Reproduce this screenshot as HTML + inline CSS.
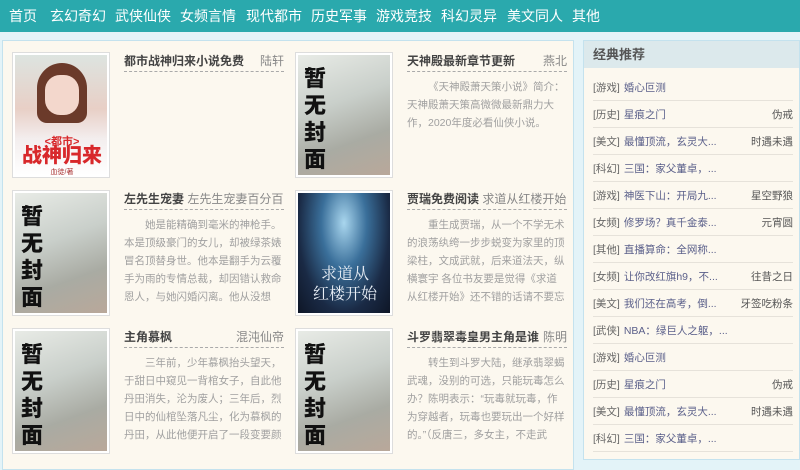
<!DOCTYPE html>
<html><head><meta charset="utf-8"><style>
*{margin:0;padding:0;box-sizing:border-box}
body{width:800px;height:456px;overflow:hidden;background:#e3f3f8;font-family:"Liberation Sans","Noto Sans CJK SC",sans-serif;position:relative}
.nav{position:absolute;left:0;top:0;width:800px;height:32px;background:#2aa9ad}
.nav span{position:absolute;top:8px;color:#fff;font-size:14px;line-height:16px;white-space:nowrap}
.left{position:absolute;left:2px;top:40px;width:572px;height:430px;background:#fcf8ef;border:1px solid #c4e2ee}
.item{position:absolute;width:270px;height:130px}
.cover{position:absolute;left:0;top:0;width:98px;height:126px;border:1px solid #ddd;background:#fff;padding:2px}
.cv{width:100%;height:100%;position:relative;overflow:hidden;background:linear-gradient(160deg,#e8ebe6 0%,#c9cfca 40%,#a9aba3 70%,#b9a89a 100%)}
.cv b{position:absolute;left:6px;top:10px;width:26px;font-size:22px;line-height:27px;color:#111;font-weight:900}
.t{position:absolute;left:112px;top:0;width:160px;height:20px;border-bottom:1px dashed #aaa;font-size:12px;line-height:19px;white-space:nowrap;overflow:hidden}
.t b{color:#444}.t i{font-style:normal;color:#888;float:right}
.d{position:absolute;left:112px;top:26px;width:158px;font-size:10.5px;line-height:18px;color:#a0a0a0;text-indent:2em;height:90px;overflow:hidden}
.right{position:absolute;left:583px;top:40px;width:217px;height:420px;background:#fcf8ef;border:1px solid #c4e2ee}
.rh{height:27px;background:#dce9ec;font-size:13px;font-weight:bold;color:#555;line-height:27px;padding-left:9px}
.row{position:absolute;left:9px;width:200px;height:27px;border-bottom:1px solid #e6e2da;font-size:10.5px;line-height:28px;white-space:nowrap}
.row .c{color:#666}.row .n{color:#5a5f8a;margin-left:4px}.row .a{position:absolute;right:0;color:#555}
</style></head><body>
<div class="nav"><span style="left:9px">首页</span><span style="left:50px">玄幻奇幻</span><span style="left:115px">武侠仙侠</span><span style="left:180px">女频言情</span><span style="left:246px">现代都市</span><span style="left:311px">历史军事</span><span style="left:376px">游戏竞技</span><span style="left:441px">科幻灵异</span><span style="left:507px">美文同人</span><span style="left:572px">其他</span></div>
<div class="left">
<div class="item" style="left:9px;top:11px"><div class="cover"><div class="cv" style="background:linear-gradient(180deg,#dde4e0 0%,#e8cfc6 45%,#f3eeee 70%,#fff 100%)"><div style="position:absolute;left:22px;top:8px;width:50px;height:60px;border-radius:25px 25px 10px 10px;background:#6b3a2a"></div><div style="position:absolute;left:30px;top:20px;width:34px;height:40px;border-radius:15px;background:#f3d7cc"></div><div style="position:absolute;left:4px;top:78px;width:86px;text-align:center;color:#d8282b;font-size:11px;font-weight:bold">&lt;都市&gt;</div><div style="position:absolute;left:2px;top:90px;width:90px;text-align:center;color:#d8282b;font-size:20px;font-weight:900;line-height:22px">战神归来</div><div style="position:absolute;left:0;top:112px;width:94px;text-align:center;color:#a33;font-size:7px">血徒/著</div></div></div>
<div class="t"><b>都市战神归来小说免费</b><i>陆轩</i></div></div>
<div class="item" style="left:292px;top:11px"><div class="cover"><div class="cv"><b>暂无封面</b></div></div>
<div class="t"><b>天神殿最新章节更新</b><i>燕北</i></div><div class="d">《天神殿萧天策小说》简介：天神殿萧天策高微微最新鼎力大作，2020年度必看仙侠小说。</div></div>
<div class="item" style="left:9px;top:149px"><div class="cover"><div class="cv"><b>暂无封面</b></div></div>
<div class="t"><b>左先生宠妻</b> <span style="color:#888">左先生宠妻百分百</span></div><div class="d">她是能精确到毫米的神枪手。本是顶级豪门的女儿，却被绿茶婊冒名顶替身世。他本是翻手为云覆手为雨的专情总裁，却因错认救命恩人，与她闪婚闪离。他从没想</div></div>
<div class="item" style="left:292px;top:149px"><div class="cover"><div class="cv" style="background:radial-gradient(ellipse at 50% 25%,#a9d6ee 0%,#3a6f9a 35%,#1a2a45 70%,#0e1626 100%)"><div style="position:absolute;left:4px;top:70px;width:86px;text-align:center;color:#e8eef5;font-size:16px;line-height:20px;font-family:'Noto Serif CJK SC',serif">求道从<br>红楼开始</div></div></div>
<div class="t"><b>贾瑞免费阅读</b> <span style="color:#888">求道从红楼开始</span></div><div class="d">重生成贾瑞，从一个不学无术的浪荡纨绔一步步蜕变为家里的顶梁柱，文成武就，后来道法天，纵横寰宇 各位书友要是觉得《求道从红楼开始》还不错的话请不要忘记</div></div>
<div class="item" style="left:9px;top:287px"><div class="cover"><div class="cv"><b>暂无封面</b></div></div>
<div class="t"><b>主角慕枫</b><i>混沌仙帝</i></div><div class="d">三年前，少年慕枫抬头望天，于甜日中窥见一背棺女子，自此他丹田消失，沦为废人；三年后，烈日中的仙棺坠落凡尘，化为慕枫的丹田，从此他便开启了一段变要颜</div></div>
<div class="item" style="left:292px;top:287px"><div class="cover"><div class="cv"><b>暂无封面</b></div></div>
<div class="t"><b>斗罗翡翠毒皇男主角是谁</b><i>陈明</i></div><div class="d">转生到斗罗大陆，继承翡翠蝎武魂，没别的可选，只能玩毒怎么办？陈明表示：“玩毒就玩毒，作为穿越者，玩毒也要玩出一个好样的。”（反唐三，多女主，不走武</div></div>
</div>
<div class="right"><div class="rh">经典推荐</div>
<div class="row" style="top:33px"><span class="c">[游戏]</span><span class="n">婚心叵测</span></div>
<div class="row" style="top:60px"><span class="c">[历史]</span><span class="n">星痕之门</span><span class="a">伪戒</span></div>
<div class="row" style="top:87px"><span class="c">[美文]</span><span class="n">最懂顶流，玄灵大...</span><span class="a">时遇未遇</span></div>
<div class="row" style="top:114px"><span class="c">[科幻]</span><span class="n">三国：家父董卓，...</span></div>
<div class="row" style="top:141px"><span class="c">[游戏]</span><span class="n">神医下山：开局九...</span><span class="a">星空野狼</span></div>
<div class="row" style="top:168px"><span class="c">[女频]</span><span class="n">修罗场？真千金泰...</span><span class="a">元宵圆</span></div>
<div class="row" style="top:195px"><span class="c">[其他]</span><span class="n">直播算命：全网称...</span></div>
<div class="row" style="top:222px"><span class="c">[女频]</span><span class="n">让你改红旗h9，不...</span><span class="a">往昔之日</span></div>
<div class="row" style="top:249px"><span class="c">[美文]</span><span class="n">我们还在高考，倒...</span><span class="a">牙签吃粉条</span></div>
<div class="row" style="top:276px"><span class="c">[武侠]</span><span class="n">NBA：绿巨人之躯，...</span></div>
<div class="row" style="top:303px"><span class="c">[游戏]</span><span class="n">婚心叵测</span></div>
<div class="row" style="top:330px"><span class="c">[历史]</span><span class="n">星痕之门</span><span class="a">伪戒</span></div>
<div class="row" style="top:357px"><span class="c">[美文]</span><span class="n">最懂顶流，玄灵大...</span><span class="a">时遇未遇</span></div>
<div class="row" style="top:384px"><span class="c">[科幻]</span><span class="n">三国：家父董卓，...</span></div>
</div>
</body></html>
